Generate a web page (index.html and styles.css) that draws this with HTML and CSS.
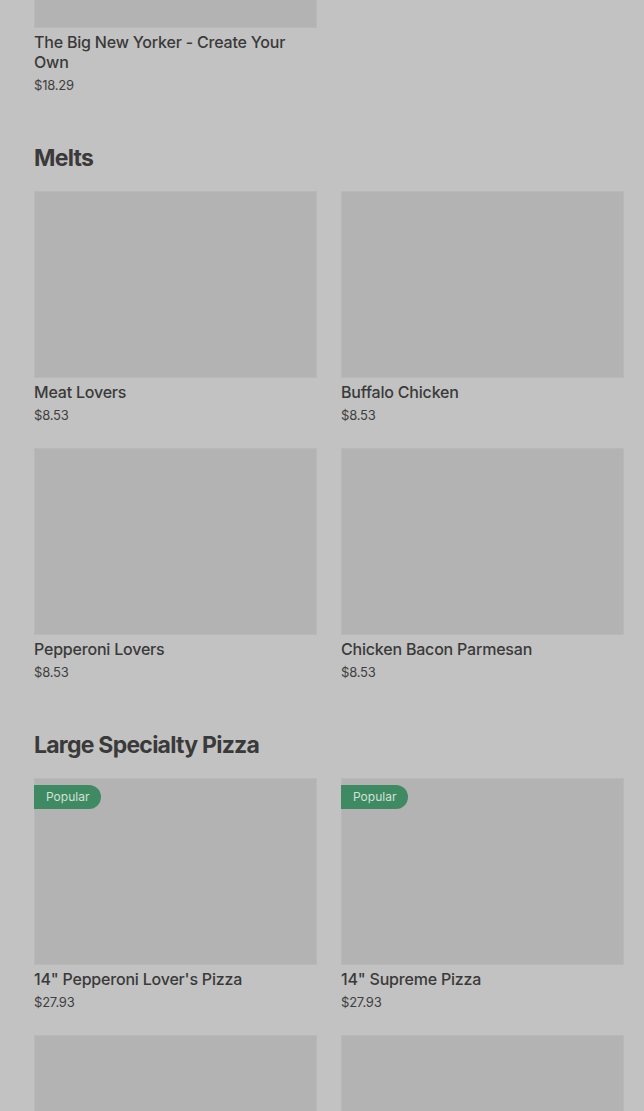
FILE: index.html
```html
<!DOCTYPE html>
<html lang="en">
<head>
  <meta charset="UTF-8" />
  <meta name="viewport" content="width=device-width, initial-scale=1" />
  <title>Menu</title>
  <link rel="stylesheet" href="styles.css">
</head>
<body>
  <main class="menu">
    <section class="section scrolled">
      <div class="grid">
        <div class="card">
          <div class="thumb"></div>
          <div class="name">The Big New Yorker - Create Your Own</div>
          <div class="price">$18.29</div>
        </div>
      </div>
    </section>

    <section class="section">
      <h2>Melts</h2>
      <div class="grid">
        <div class="card">
          <div class="thumb"></div>
          <div class="name">Meat Lovers</div>
          <div class="price">$8.53</div>
        </div>
        <div class="card">
          <div class="thumb"></div>
          <div class="name">Buffalo Chicken</div>
          <div class="price">$8.53</div>
        </div>
        <div class="card">
          <div class="thumb"></div>
          <div class="name">Pepperoni Lovers</div>
          <div class="price">$8.53</div>
        </div>
        <div class="card">
          <div class="thumb"></div>
          <div class="name">Chicken Bacon Parmesan</div>
          <div class="price">$8.53</div>
        </div>
      </div>
    </section>

    <section class="section">
      <h2>Large Specialty Pizza</h2>
      <div class="grid">
        <div class="card">
          <div class="thumb"><span class="badge">Popular</span></div>
          <div class="name">14" Pepperoni Lover's Pizza</div>
          <div class="price">$27.93</div>
        </div>
        <div class="card">
          <div class="thumb"><span class="badge">Popular</span></div>
          <div class="name">14" Supreme Pizza</div>
          <div class="price">$27.93</div>
        </div>
        <div class="card">
          <div class="thumb"></div>
          <div class="name">&nbsp;</div>
          <div class="price">&nbsp;</div>
        </div>
        <div class="card">
          <div class="thumb"></div>
          <div class="name">&nbsp;</div>
          <div class="price">&nbsp;</div>
        </div>
      </div>
    </section>
  </main>
</body>
</html>
```

FILE: styles.css
```css
/* Reset */
* {
  box-sizing: border-box;
}
html, body {
  height: 100%;
  overflow: hidden;
}
body {
  margin: 0;
  background: #c2c2c2;
  font-family: Inter, 'Liberation Sans', sans-serif;
  color: #3a3a3a;
}
.menu {
  padding: 0 20px 0 34px;
}
.section {
  margin-bottom: 50px;
}
.scrolled {
  margin-top: -159px;
}
h2 {
  margin: 0 0 19px;
  font-size: 23px;
  line-height: 28px;
  font-weight: 700;
  letter-spacing: -0.75px;
  color: #3a3a3a;
}
.grid {
  display: grid;
  grid-template-columns: 283px 283px;
  column-gap: 24px;
  row-gap: 24px;
}
.thumb {
  position: relative;
  height: 187px;
  margin-bottom: 4px;
  background: #b3b3b3;
  box-shadow: inset 0 0 0 1px #b8b8b8;
}
.badge {
  position: absolute;
  top: 7px;
  left: 0;
  padding: 0 12px;
  height: 24px;
  line-height: 24px;
  font-size: 12px;
  color: #cfe2d6;
  background: #3f8a63;
  border-radius: 0 12px 12px 0;
}
.name {
  font-size: 16px;
  line-height: 20px;
  font-weight: 500;
  letter-spacing: -0.2px;
  color: #3a3a3a;
  padding-right: 20px;
}
.price {
  margin-top: 4px;
  font-size: 13px;
  line-height: 18px;
  color: #3f3f3f;
  letter-spacing: -0.2px;
}
```
